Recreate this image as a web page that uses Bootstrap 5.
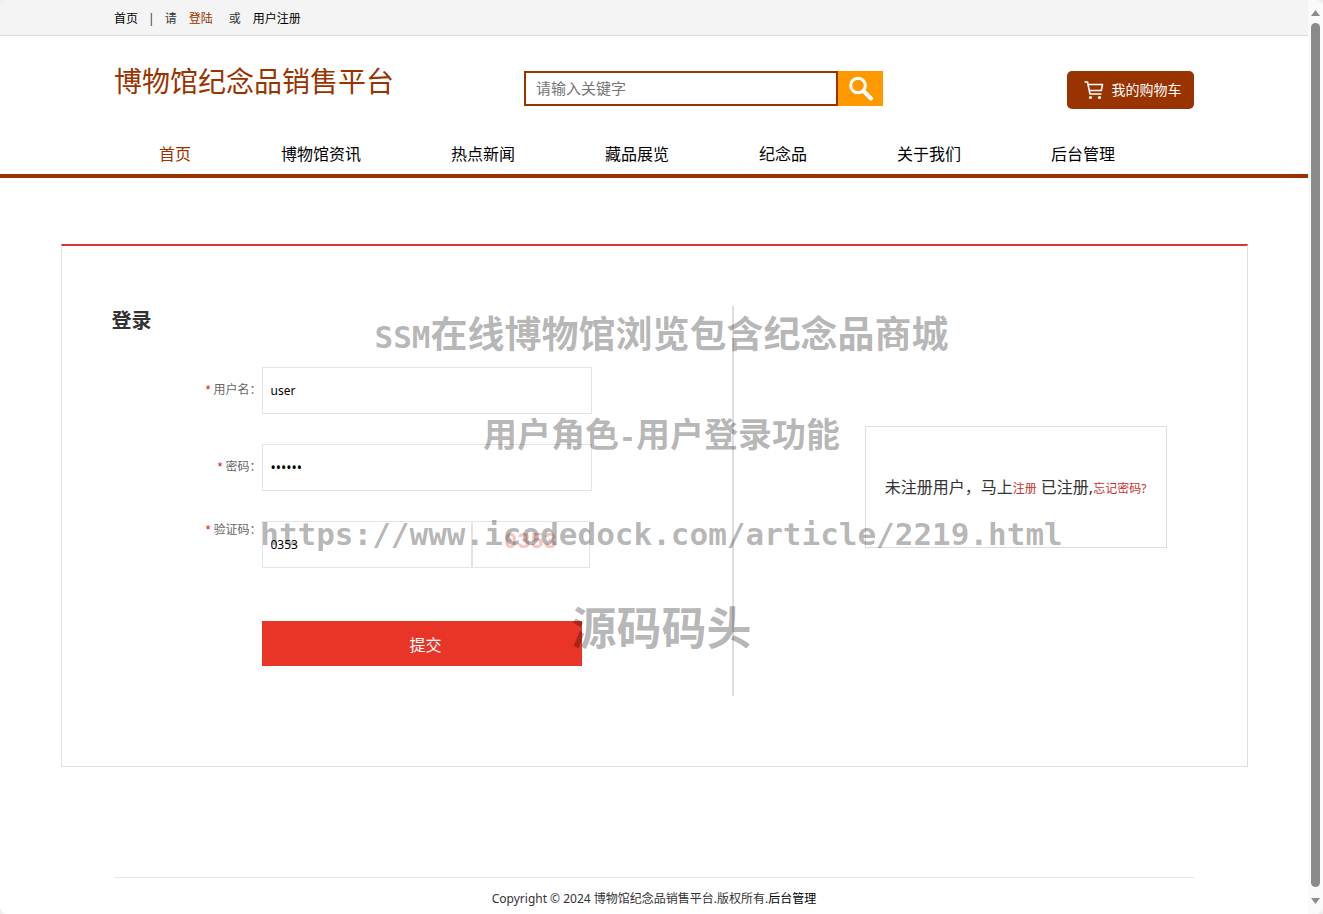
<!DOCTYPE html>
<html lang="zh-CN">
<head>
<meta charset="utf-8">
<meta name="viewport" content="width=device-width, initial-scale=1">
<title>博物馆纪念品销售平台 - 登录</title>
<link href="https://cdn.jsdelivr.net/npm/bootstrap@5.3.0/dist/css/bootstrap.min.css" rel="stylesheet">
<style>
  body { font-family: "Noto Sans", "Noto Sans CJK SC", sans-serif; font-size: 12px; line-height: 18px; color: #333; background: #eee; }
  a { color: #000; text-decoration: none; }
  a:hover { color: #930; text-decoration: underline; }
  .shell { background: #fff; border-radius: 8px; overflow: hidden; }
  .wrap { width: 100%; max-width: 1080px; margin: 0 auto; }
  .brand-color { color: #930; }

  .topbar { background: #f4f4f4; border-bottom: 1px solid #ddd; }
  .topbar .wrap { height: 35px; gap: 10px; padding-top: 2px; }
  .topbar .prompt { gap: 12px; }

  .masthead { padding-top: 25px; }
  .site-name { font-size: 28px; line-height: 40px; width: 410px; }
  .search { width: 359px; height: 35px; margin-top: 10px; }
  .search input { border: 2px solid #930; border-radius: 0; font-size: 15px; padding: 0 10px 2px; height: 35px; }
  .search input::placeholder { color: #757575; }
  .search button { width: 45px; flex: none; border: 0; background: #f90; }
  .cart-btn { height: 38px; width: 127px; margin-top: 10px; padding-left: 4px; background: #930; color: #fff; font-size: 14px; border-radius: 5px; gap: 8px; }
  .cart-btn:hover { color: #fff; }

  .mainnav { border-bottom: 4px solid #930; margin-top: 26px; }
  .mainnav .nav-link { font-size: 16px; line-height: 24px; padding: 7px 45px 8px; color: #000; }
  .mainnav .nav-link.active { color: #930; }

  .login-panel { max-width: 1187px; width: calc(100% - 30px); margin: 66px auto 0; border: 1px solid #e0e0e0; border-top: 2px solid #d33a31; padding: 60px 0 70px; display: grid; grid-template-columns: 672fr 513fr; }
  .login-side { border-right: 2px solid #ddd; min-height: 390px; }
  .login-side h1 { font-size: 20px; line-height: 30px; font-weight: 700; margin: 0 0 31px 50px; }
  .field { margin-bottom: 30px; }
  .field label { width: 200px; flex: none; text-align: right; color: #666; line-height: 46px; }
  .field label.raised { line-height: 18px; }
  .field .star { color: #d00; font-family: "Liberation Sans", sans-serif; }
  .field input { width: 330px; height: 47px; border: 1px solid #e4e4e4; border-radius: 0; padding: 0 8px; font-size: 12px; color: #000; }
  .field input[type=password] { font-size: 14px; }
  .field .code-input { width: 210px; }
  .captcha { width: 118px; height: 47px; border: 1px solid #e4e4e4; color: #f5c4c0; font: bold 22px/42px "Liberation Mono", monospace; }
  .submit-btn { width: 320px; height: 45px; margin: 23px 0 0 200px; padding: 2px 0 0 8px; border: 0; background: #e83528; color: #fff; font-size: 16px; }
  .hint-box { width: 302px; height: 122px; margin: 120px 80px 0 auto; padding-top: 2px; border: 1px solid #ddd; font-size: 16px; }
  .hint-box a { font-size: 12px; color: #c9302c; }

  footer { padding-top: 110px; }
  footer .wrap { border-top: 1px solid #e8e8e8; padding: 12px 0 6px; }

  .overlay { inset: 0; padding-top: 284px; pointer-events: none; color: rgba(0,0,0,.3); font-weight: 700; line-height: 100px; white-space: nowrap; }
  .overlay div { height: 100px; }
  .overlay .mono { font-family: "DejaVu Sans Mono", "Noto Sans CJK SC", monospace; }
  .overlay .w-title { font-size: 37px; }
  .overlay .w-title span { font-size: 31px; }
  .overlay .w-role { font-size: 34px; }
  .overlay .w-role span { font-size: 28px; }
  .overlay .w-url { font-size: 31px; }
  .overlay .w-brand { font-size: 45px; line-height: 88px; }

  .rail { width: 15px; flex: none; background: #fafafa; padding: 10px 3px 10px 3px; gap: 7px; }
  .rail i { width: 9px; background: #8b8b8b; border-radius: 5px; margin-bottom: 4px; }
</style>
<script src="https://cdn.jsdelivr.net/npm/bootstrap@5.3.0/dist/js/bootstrap.bundle.min.js"></script>
</head>
<body>
<div class="shell d-flex min-vh-100 position-relative">
  <div class="flex-grow-1 d-flex flex-column">
    <div class="topbar">
      <div class="wrap d-flex align-items-center">
        <a href="#">首页</a><span>|</span>
        <div class="prompt d-flex"><span>请</span><a href="#" class="brand-color">登陆</a><span class="ms-1">或</span><a href="#">用户注册</a></div>
      </div>
    </div>

    <header>
      <div class="wrap masthead d-flex align-items-start">
        <div class="site-name brand-color">博物馆纪念品销售平台</div>
        <form class="search d-flex" role="search">
          <input class="form-control shadow-none" type="text" placeholder="请输入关键字" aria-label="搜索">
          <button type="button" aria-label="搜索" class="d-flex align-items-center justify-content-center p-0">
            <svg width="26" height="26" viewBox="0 0 26 26" fill="none" stroke="#fff"><circle cx="10" cy="9.500" r="7.300" stroke-width="3"/><path d="M15.500 15l7.500 7.500" stroke-width="4" stroke-linecap="round"/></svg>
          </button>
        </form>
        <a href="#" class="cart-btn ms-auto d-flex align-items-center justify-content-center">
          <svg width="20" height="20" viewBox="0 0 20 20" fill="none" stroke="#fff" stroke-width="1.600" stroke-linejoin="round"><path d="M.5 2H3.500L6 14H17.500M4 4.500H18.500L17.300 10.500H5.300"/><circle cx="6.500" cy="17.500" r="1.600" fill="#fff" stroke="none"/><circle cx="15.500" cy="17.500" r="1.600" fill="#fff" stroke="none"/></svg>
          我的购物车
        </a>
      </div>
      <nav class="mainnav">
        <div class="wrap nav">
          <a class="nav-link active" href="#">首页</a>
          <a class="nav-link" href="#">博物馆资讯</a>
          <a class="nav-link" href="#">热点新闻</a>
          <a class="nav-link" href="#">藏品展览</a>
          <a class="nav-link" href="#">纪念品</a>
          <a class="nav-link" href="#">关于我们</a>
          <a class="nav-link" href="#">后台管理</a>
        </div>
      </nav>
    </header>

    <main class="login-panel">
      <form class="login-side">
        <h1>登录</h1>
        <div class="field d-flex">
          <label for="user"><span class="star">*</span> 用户名：</label>
          <input id="user" type="text" value="user">
        </div>
        <div class="field d-flex">
          <label for="pwd"><span class="star">*</span> 密码：</label>
          <input id="pwd" type="password" value="123456">
        </div>
        <div class="field d-flex">
          <label for="code" class="raised"><span class="star">*</span> 验证码：</label>
          <input id="code" class="code-input" type="text" value="0353">
          <div class="captcha text-center">0353</div>
        </div>
        <button type="button" class="submit-btn">提交</button>
      </form>
      <div>
        <div class="hint-box d-flex align-items-center justify-content-center">
          <div>未注册用户，马上<a href="#">注册</a> 已注册,<a href="#">忘记密码?</a></div>
        </div>
      </div>
    </main>

    <footer class="mt-auto">
      <div class="wrap text-center">Copyright © 2024 博物馆纪念品销售平台.版权所有.<a href="#">后台管理</a></div>
    </footer>
  </div>

  <div class="rail d-flex flex-column align-items-center" aria-hidden="true">
    <svg width="9" height="6" viewBox="0 0 9 6"><path d="M0 6L4.500 0L9 6z" fill="#8b8b8b"/></svg>
    <i class="flex-grow-1"></i>
    <svg width="9" height="6" viewBox="0 0 9 6"><path d="M0 0L4.500 6L9 0z" fill="#8b8b8b"/></svg>
  </div>

  <div class="overlay position-absolute text-center">
    <div class="w-title"><span class="mono">SSM</span>在线博物馆浏览包含纪念品商城</div>
    <div class="w-role">用户角色<span class="mono">-</span>用户登录功能</div>
    <div class="w-url mono">https://www.icodedock.com/article/2219.html</div>
    <div class="w-brand">源码码头</div>
  </div>
</div>
</body>
</html>
